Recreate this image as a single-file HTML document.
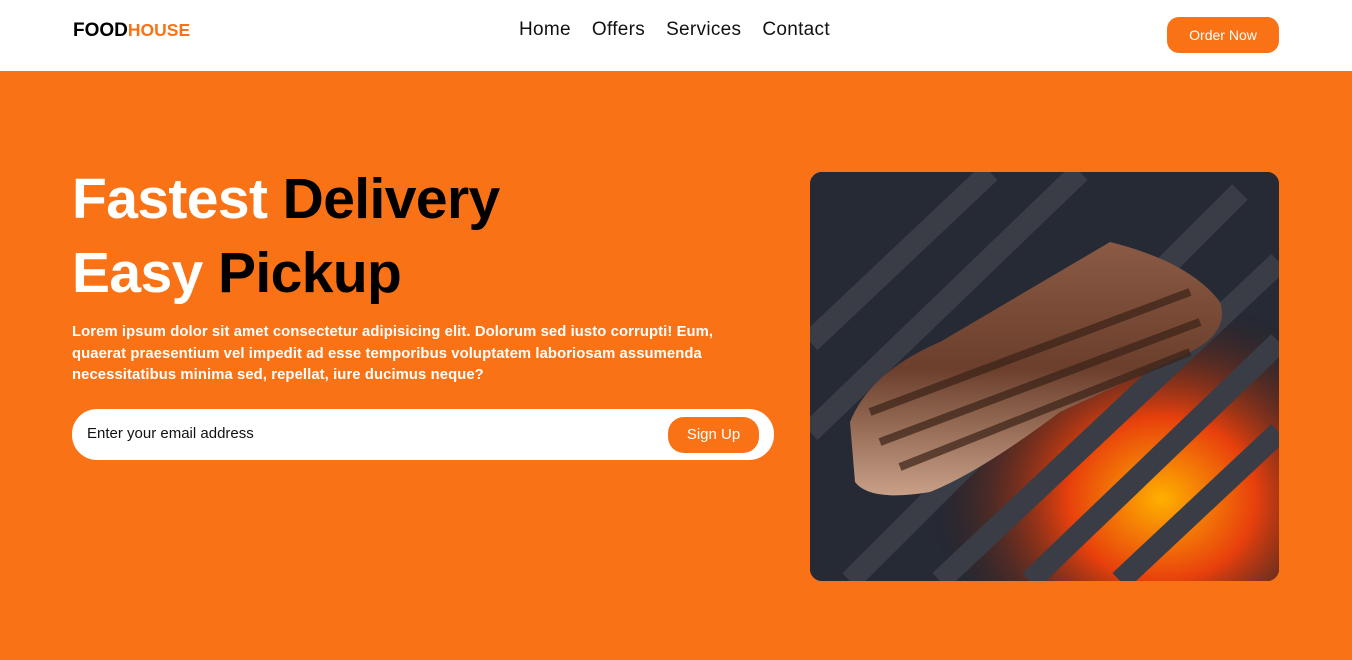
<!DOCTYPE html>
<html><head><meta charset="utf-8"><style>
*{margin:0;padding:0;box-sizing:border-box}
body{width:1352px;height:660px;overflow:hidden;font-family:"Liberation Sans",sans-serif;background:#f97316;position:relative}
.nav{position:absolute;left:0;top:0;width:1352px;height:71px;background:#fff}
.logo{position:absolute;left:73px;top:20px;font-size:19px;font-weight:bold;letter-spacing:0;color:#000}
.logo span{color:#f97316;font-size:17.5px}
.links{position:absolute;left:519px;top:19px;font-size:19px;color:#111;letter-spacing:0.3px}
.links a{margin-right:21px}
.order{position:absolute;left:1167px;top:17px;width:112px;height:36px;border-radius:12px;background:#f97316;color:#fff;font-size:14px;text-align:center;line-height:36px}
h1{position:absolute;left:72px;font-size:57px;font-weight:bold;letter-spacing:-0.6px;color:#000}
h1 .w{color:#fff}
p{position:absolute;left:72px;top:322px;width:690px;font-size:14.8px;line-height:21.5px;color:#fff;font-weight:bold;letter-spacing:0.1px}
.email{position:absolute;left:72px;top:409px;width:702px;height:51px;border-radius:25px;background:#fff}
.email span{position:absolute;left:15px;top:16px;font-size:15px;color:#111}
.email b{position:absolute;left:596px;top:8px;width:91px;height:36px;border-radius:16px;background:#f97316;color:#fff;font-weight:normal;font-size:15px;text-align:center;line-height:36px}
.img{position:absolute;left:810px;top:172px;width:469px;height:409px;border-radius:12px;overflow:hidden;background:#222530}
</style></head><body>
<div class="nav">
<div class="logo">FOOD<span>HOUSE</span></div>
<div class="links"><a>Home</a><a>Offers</a><a>Services</a><a>Contact</a></div>
<div class="order">Order Now</div>
</div>
<h1 style="top:166px"><span class="w">Fastest</span> Delivery</h1>
<h1 style="top:240px"><span class="w">Easy</span> Pickup</h1>
<p>Lorem ipsum dolor sit amet consectetur adipisicing elit. Dolorum sed iusto corrupti! Eum, quaerat praesentium vel impedit ad esse temporibus voluptatem laboriosam assumenda necessitatibus minima sed, repellat, iure ducimus neque?</p>
<div class="email"><span>Enter your email address</span><b>Sign Up</b></div>
<div class="img">
<svg width="469" height="409" viewBox="0 0 469 409">
<defs>
<radialGradient id="f" cx="0.75" cy="0.8" r="0.5"><stop offset="0" stop-color="#ffb000"/><stop offset="0.4" stop-color="#e8400c"/><stop offset="1" stop-color="#2a1a18" stop-opacity="0"/></radialGradient>
<linearGradient id="m" x1="0" y1="0" x2="0" y2="1"><stop offset="0" stop-color="#8a5a45"/><stop offset="0.5" stop-color="#6b3f2c"/><stop offset="1" stop-color="#c8a088"/></linearGradient>
</defs>
<rect width="469" height="409" fill="#252a35"/>
<rect width="469" height="409" fill="url(#f)"/>
<g stroke="#3a3d45" stroke-width="22">
<line x1="0" y1="170" x2="180" y2="0"/><line x1="0" y1="260" x2="270" y2="0"/><line x1="40" y1="409" x2="430" y2="20"/><line x1="130" y1="409" x2="469" y2="90"/><line x1="220" y1="409" x2="469" y2="170"/><line x1="310" y1="409" x2="469" y2="260"/>
</g>
<path d="M40 250 Q60 200 130 170 L300 70 Q380 90 410 130 Q420 160 380 180 L250 240 Q170 300 120 320 Q60 330 45 310 Z" fill="url(#m)"/>
<path d="M60 240 L380 120 M70 270 L390 150 M90 295 L380 180" stroke="#3a2218" stroke-width="8" fill="none" opacity="0.7"/>
</svg>
</div>
</body></html>
